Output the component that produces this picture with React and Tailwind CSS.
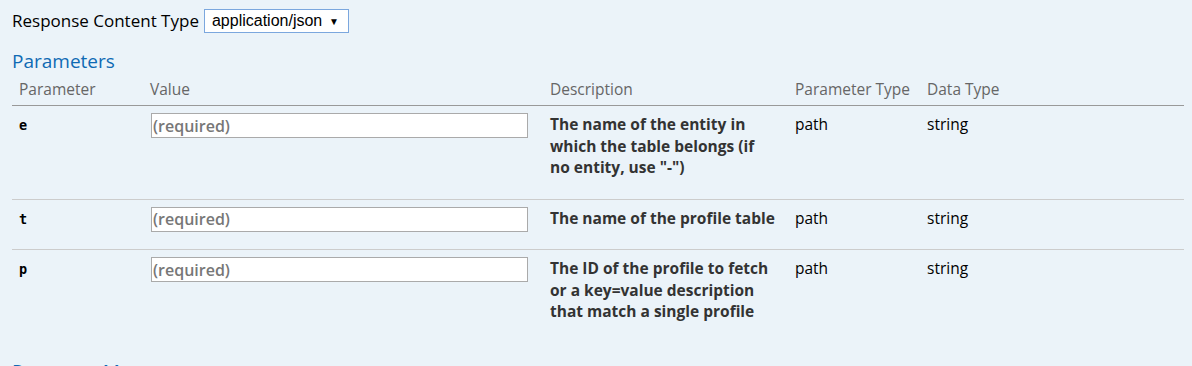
const params = [
  { name: 'e', desc: 'The name of the entity in which the table belongs (if no entity, use "-")' },
  { name: 't', desc: 'The name of the profile table' },
  { name: 'p', desc: 'The ID of the profile to fetch or a key=value description that match a single profile' },
];

export default function App() {
  return (
    <div className="min-h-[366px] bg-[#ebf3f9] px-3 pt-[9px] font-['Open_Sans',sans-serif] text-[#222]">
      {/* Content type */}
      <div className="flex items-center gap-[5px]">
        <span className="text-[17px] leading-[24px] text-black">Response Content Type</span>
        <div className="flex h-[24px] w-[145px] items-center justify-between border border-[#7ba7de] bg-white pl-[7px] pr-[9px] font-['Liberation_Sans',Arial,sans-serif] text-[16px] text-black">
          <span>application/json</span>
          <span className="text-[10px]">▼</span>
        </div>
      </div>

      <h4 className="mt-[13px] text-[19px] leading-[30px] text-[#0f6ab4]">Parameters</h4>

      <table className="w-[1172px] table-fixed border-collapse">
        <thead>
          <tr className="border-b border-[#999]">
            <th className="w-[132px] px-[7px] pt-[2px] pb-[4px] text-left text-[15.5px] font-normal text-[#666]">Parameter</th>
            <th className="w-[399px] px-[6px] pt-[2px] pb-[4px] text-left text-[15.5px] font-normal text-[#666]">Value</th>
            <th className="w-[245px] px-[7px] pt-[2px] pb-[4px] text-left text-[15.5px] font-normal text-[#666]">Description</th>
            <th className="w-[132px] px-[7px] pt-[2px] pb-[4px] text-left text-[15.5px] font-normal text-[#666]">Parameter Type</th>
            <th className="px-[7px] pt-[2px] pb-[4px] text-left text-[15.5px] font-normal text-[#666]">Data Type</th>
          </tr>
        </thead>
        <tbody>
          {params.map((p, i) => (
            <tr key={p.name} className={i < params.length - 1 ? 'border-b border-[#ccc] align-top' : 'align-top'}>
              <td className="px-[7px] pt-[8px] font-['DejaVu_Sans_Mono',monospace] text-[13.5px] font-bold leading-[22px] text-black">
                {p.name}
              </td>
              <td className="px-[7px] pt-[7px]">
                <input
                  placeholder="(required)"
                  className="h-[25px] w-[377px] border border-[#aaa] bg-white px-[1px] text-[16px] font-semibold text-[#333] placeholder:text-[#777] outline-none"
                />
              </td>
              <td className="px-[7px] pt-[8px] pb-[20px]">
                <p className="max-w-[226px] text-[15.5px] font-bold leading-[21.5px] text-[#333]">{p.desc}</p>
              </td>
              <td className="px-[7px] pt-[8px] text-[15.5px] leading-[21.5px] text-black">path</td>
              <td className="px-[7px] pt-[8px] text-[15.5px] leading-[21.5px] text-black">string</td>
            </tr>
          ))}
        </tbody>
      </table>

      <h4 className="mt-[13px] text-[19px] leading-[30px] text-[#0f6ab4]">Response Messages</h4>
    </div>
  );
}
